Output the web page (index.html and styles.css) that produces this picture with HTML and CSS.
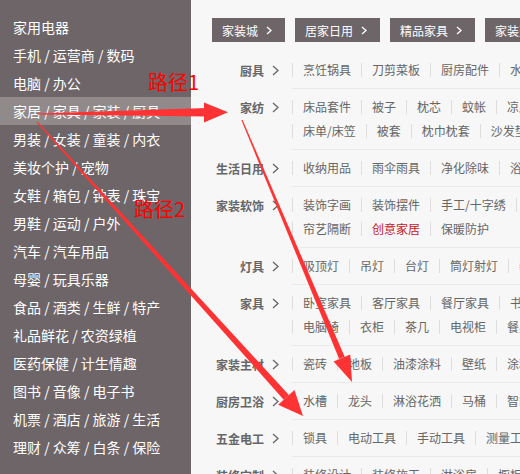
FILE: index.html
```html
<!DOCTYPE html>
<html lang="zh-CN">
<head>
<meta charset="utf-8">
<title>家居分类</title>
<link rel="stylesheet" href="styles.css">
</head>
<body>
<div class="page">
  <ul class="side">
    <li>家用电器</li>
    <li>手机 / 运营商 / 数码</li>
    <li>电脑 / 办公</li>
    <li class="on">家居 / 家具 / 家装 / 厨具</li>
    <li>男装 / 女装 / 童装 / 内衣</li>
    <li>美妆个护 / 宠物</li>
    <li>女鞋 / 箱包 / 钟表 / 珠宝</li>
    <li>男鞋 / 运动 / 户外</li>
    <li>汽车 / 汽车用品</li>
    <li>母婴 / 玩具乐器</li>
    <li>食品 / 酒类 / 生鲜 / 特产</li>
    <li>礼品鲜花 / 农资绿植</li>
    <li>医药保健 / 计生情趣</li>
    <li>图书 / 音像 / 电子书</li>
    <li>机票 / 酒店 / 旅游 / 生活</li>
    <li>理财 / 众筹 / 白条 / 保险</li>
  </ul>

  <div class="panel">
    <div class="channels">
      <a class="chan">家装城<svg class="chev-w" viewBox="0 0 6 9"><polyline points="1,1 5,4.5 1,8"/></svg></a>
      <a class="chan">居家日用<svg class="chev-w" viewBox="0 0 6 9"><polyline points="1,1 5,4.5 1,8"/></svg></a>
      <a class="chan">精品家具<svg class="chev-w" viewBox="0 0 6 9"><polyline points="1,1 5,4.5 1,8"/></svg></a>
      <a class="chan">家装建材<svg class="chev-w" viewBox="0 0 6 9"><polyline points="1,1 5,4.5 1,8"/></svg></a>
    </div>

    <dl class="cats">
      <div class="cat">
        <dt>厨具<svg class="chev" viewBox="0 0 7 11"><polyline points="1,1 6,5.5 1,10"/></svg></dt>
        <dd>
          <div class="line"><a>烹饪锅具</a><a>刀剪菜板</a><a>厨房配件</a><a>水具酒具</a><a>餐具</a></div>
        </dd>
      </div>
      <div class="cat">
        <dt>家纺<svg class="chev" viewBox="0 0 7 11"><polyline points="1,1 6,5.5 1,10"/></svg></dt>
        <dd>
          <div class="line"><a>床品套件</a><a>被子</a><a>枕芯</a><a>蚊帐</a><a>凉席</a><a>毛巾浴巾</a></div>
          <div class="line"><a>床单/床笠</a><a>被套</a><a>枕巾枕套</a><a>沙发垫套</a><a>地毯地垫</a></div>
        </dd>
      </div>
      <div class="cat">
        <dt>生活日用<svg class="chev" viewBox="0 0 7 11"><polyline points="1,1 6,5.5 1,10"/></svg></dt>
        <dd>
          <div class="line"><a>收纳用品</a><a>雨伞雨具</a><a>净化除味</a><a>浴室用品</a><a>洗晒/熨烫</a></div>
        </dd>
      </div>
      <div class="cat">
        <dt>家装软饰<svg class="chev" viewBox="0 0 7 11"><polyline points="1,1 6,5.5 1,10"/></svg></dt>
        <dd>
          <div class="line"><a>装饰字画</a><a>装饰摆件</a><a>手工/十字绣</a><a>相框/照片墙</a></div>
          <div class="line"><a>帘艺隔断</a><a class="hot">创意家居</a><a>保暖防护</a></div>
        </dd>
      </div>
      <div class="cat">
        <dt>灯具<svg class="chev" viewBox="0 0 7 11"><polyline points="1,1 6,5.5 1,10"/></svg></dt>
        <dd>
          <div class="line"><a>吸顶灯</a><a>吊灯</a><a>台灯</a><a>筒灯射灯</a><a>装饰灯</a></div>
        </dd>
      </div>
      <div class="cat">
        <dt>家具<svg class="chev" viewBox="0 0 7 11"><polyline points="1,1 6,5.5 1,10"/></svg></dt>
        <dd>
          <div class="line"><a>卧室家具</a><a>客厅家具</a><a>餐厅家具</a><a>书房家具</a></div>
          <div class="line"><a>电脑椅</a><a>衣柜</a><a>茶几</a><a>电视柜</a><a>餐桌</a></div>
        </dd>
      </div>
      <div class="cat">
        <dt>家装主材<svg class="chev" viewBox="0 0 7 11"><polyline points="1,1 6,5.5 1,10"/></svg></dt>
        <dd>
          <div class="line"><a>瓷砖</a><a>地板</a><a>油漆涂料</a><a>壁纸</a><a>涂料</a></div>
        </dd>
      </div>
      <div class="cat">
        <dt>厨房卫浴<svg class="chev" viewBox="0 0 7 11"><polyline points="1,1 6,5.5 1,10"/></svg></dt>
        <dd>
          <div class="line"><a>水槽</a><a>龙头</a><a>淋浴花洒</a><a>马桶</a><a>智能马桶</a></div>
        </dd>
      </div>
      <div class="cat">
        <dt>五金电工<svg class="chev" viewBox="0 0 7 11"><polyline points="1,1 6,5.5 1,10"/></svg></dt>
        <dd>
          <div class="line"><a>锁具</a><a>电动工具</a><a>手动工具</a><a>测量工具</a></div>
        </dd>
      </div>
      <div class="cat">
        <dt>装修定制<svg class="chev" viewBox="0 0 7 11"><polyline points="1,1 6,5.5 1,10"/></svg></dt>
        <dd>
          <div class="line"><a>装修设计</a><a>装修施工</a><a>淋浴房</a><a>橱柜</a></div>
        </dd>
      </div>
    </dl>
  </div>

  <svg class="marks" viewBox="0 0 520 474" width="520" height="474">
    <polygon points="37,113.4 207,108 207,116.5 37,114.4"/>
    <polygon points="204,102.5 228,112.3 204,122.5"/>
    <polygon points="242.55,119.77 344.67,356.74 339.13,359.06 241.45,120.23"/>
    <polygon points="350.2,354.4 352,382 333.6,361.4"/>
    <polygon points="37.44,121.6 288.9,394.95 283.7,399.65 36.56,122.4"/>
    <polygon points="294.45,389.92 303,416 278.15,404.68"/>
  </svg>
  <span class="note n1">路径1</span>
  <span class="note n2">路径2</span>
</div>
</body>
</html>
```

FILE: styles.css
```css
html, body {
  margin: 0;
  padding: 0;
}

body {
  font-family: "Noto Sans CJK SC", "Noto Sans", sans-serif;
  background: #f7f7f7;
}

.page {
  position: relative;
  display: flex;
  width: 520px;
  height: 474px;
  overflow: hidden;
}

.side {
  flex: none;
  width: 191px;
  margin: 0;
  padding: 13px 0 0;
  list-style: none;
  background: #6e6568;
}

.side li {
  height: 28px;
  line-height: 28px;
  padding-left: 13px;
  color: #fff;
  font-size: 14px;
  white-space: nowrap;
}

.side li.on {
  background: #918a8b;
}

.panel {
  flex: 1;
  min-width: 0;
  overflow: hidden;
  background: #f7f7f7;
  padding: 18px 0 0 21px;
}

.channels {
  display: flex;
  gap: 10px;
  height: 24px;
}

.chan {
  flex: none;
  display: flex;
  align-items: center;
  height: 24px;
  padding: 0 13px 0 10px;
  background: #6e6568;
  color: #fff;
  font-size: 12px;
  white-space: nowrap;
}

.chev-w {
  width: 6px;
  height: 9px;
  margin-left: 8px;
  fill: none;
  stroke: #fff;
  stroke-width: 1.3;
}

.cats {
  margin: 9px 0 0;
  padding: 0;
}

.cat {
  display: flex;
  align-items: flex-start;
}

.cat dt {
  flex: none;
  box-sizing: border-box;
  width: 80px;
  height: 24px;
  margin-top: 7px;
  padding-right: 13px;
  display: flex;
  align-items: center;
  justify-content: flex-end;
  font-size: 12px;
  font-weight: bold;
  color: #666;
  white-space: nowrap;
}

.chev {
  width: 7px;
  height: 11px;
  margin-left: 8px;
  fill: none;
  stroke: #666;
  stroke-width: 1.3;
}

.cat dd {
  flex: 1;
  min-width: 0;
  margin: 0;
  padding: 6px 0;
  border-top: 1px solid #eaeaea;
}

.cat:first-child dd {
  border-top-color: transparent;
}

.line {
  display: flex;
  align-items: center;
  height: 24px;
  white-space: nowrap;
}

.line a {
  flex: none;
  padding: 0 10px;
  border-left: 1px solid #dddddd;
  line-height: 14px;
  font-size: 12px;
  color: #666;
}

.line a.hot {
  color: #c81623;
}

.marks {
  position: absolute;
  left: 0;
  top: 0;
  pointer-events: none;
  fill: #ff3333;
}

.note {
  position: absolute;
  font-size: 20px;
  line-height: 20px;
  color: #ff0000;
  white-space: nowrap;
}

.n1 {
  left: 148px;
  top: 72px;
}

.n2 {
  left: 134px;
  top: 199px;
}
```
